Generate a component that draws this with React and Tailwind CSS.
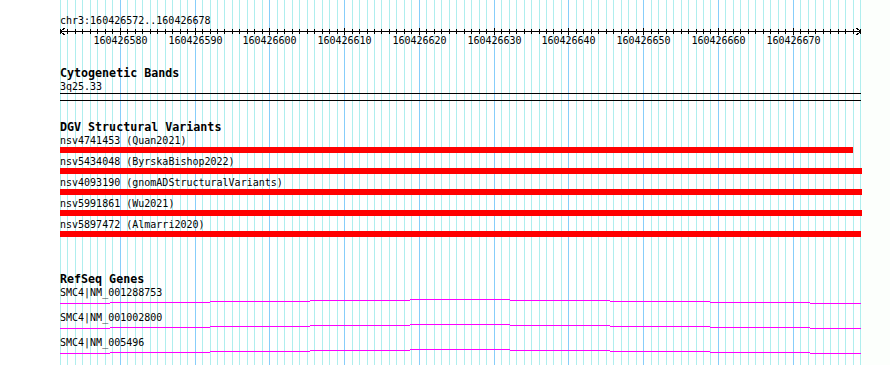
const START = 160426572;
const END = 160426678;
const PX = 800 / (END - START + 1);
const xOf = (b) => Math.round(60 + (b - START) * PX) + 0.5;

const bases = Array.from({ length: END - START + 2 }, (_, i) => START + i);

const variants = [
  { id: 'nsv4741453', study: 'Quan2021', end: 853 },
  { id: 'nsv5434048', study: 'ByrskaBishop2022', end: 862 },
  { id: 'nsv4093190', study: 'gnomADStructuralVariants', end: 862 },
  { id: 'nsv5991861', study: 'Wu2021', end: 862 },
  { id: 'nsv5897472', study: 'Almarri2020', end: 861 },
];

const genes = ['SMC4|NM_001288753', 'SMC4|NM_001002800', 'SMC4|NM_005496'];

// intron "hat" across the whole view, drawn with GD-style pixel steps
const hat = [
  [60, 110, 4],
  [110, 210, 3],
  [210, 310, 2],
  [310, 410, 1],
  [410, 510, 0],
  [510, 610, 1],
  [610, 710, 2],
  [710, 810, 3],
  [810, 861, 4],
];

function Grid() {
  return (
    <svg className="absolute inset-0" width="890" height="365" shapeRendering="crispEdges">
      <rect x="861" y="0" width="29" height="365" fill="#fcfffc" />
      {bases.map((b) => (
        <line
          key={b}
          x1={xOf(b)}
          x2={xOf(b)}
          y1="0"
          y2="365"
          stroke={b % 10 === 0 ? '#87cefa' : '#afeeee'}
          strokeWidth="1"
        />
      ))}
    </svg>
  );
}

function Ruler() {
  return (
    <svg width="890" height="21" className="block" shapeRendering="crispEdges">
      <line x1="60" x2="861" y1="4.5" y2="4.5" stroke="#000" />
      {bases.map((b) => (
        <line key={b} x1={xOf(b)} x2={xOf(b)} y1={b % 10 === 0 ? 1 : 2} y2={b % 10 === 0 ? 8 : 7} stroke="#000" />
      ))}
      <polyline points="64.5,1 60.5,4.5 64.5,8" fill="none" stroke="#000" />
      <polyline points="856.5,1 860.5,4.5 856.5,8" fill="none" stroke="#000" />
      {bases
        .filter((b) => b % 10 === 0 && b <= END)
        .map((b) => (
          <text
            key={b}
            x={xOf(b)}
            y="17"
            textAnchor="middle"
            fontSize="10"
            fontFamily="DejaVu Sans Mono, monospace"
            fill="#000"
          >
            {b}
          </text>
        ))}
    </svg>
  );
}

export default function App() {
  return (
    <div className="relative w-[890px] h-[365px] overflow-hidden bg-white text-black font-['DejaVu_Sans_Mono',monospace] text-[10px] leading-[13px]">
      <Grid />
      <div className="relative flex flex-col">
        <div className="pl-[60px] mt-[14px]">chr3:160426572..160426678</div>
        <Ruler />

        <div className="pl-[60px] mt-[19px] flex flex-col">
          <div className="font-bold text-[11.67px] leading-[13px]">Cytogenetic Bands</div>
          <div>3q25.33</div>
          <div className="w-[801px] h-[8px] border-y border-black" />
        </div>

        <div className="pl-[60px] mt-[20px] flex flex-col">
          <div className="font-bold text-[11.67px] leading-[13px]">DGV Structural Variants</div>
          {variants.map((v) => (
            <div key={v.id} className="flex flex-col h-[21px]">
              <div>
                {v.id} ({v.study})
              </div>
              <div className="h-[6px] bg-[#ff0000]" style={{ width: v.end - 60 }} />
            </div>
          ))}
        </div>

        <div className="pl-[60px] mt-[34px] flex flex-col">
          <div className="font-bold text-[11.67px] leading-[13px]">RefSeq Genes</div>
          {genes.map((g) => (
            <div key={g} className="flex flex-col h-[25px]">
              <div>{g}</div>
              <svg width="861" height="12" className="block -ml-[60px]" viewBox="0 0 861 12" shapeRendering="crispEdges">
                {hat.map(([a, b, y]) => (
                  <line key={a} x1={a} x2={b} y1={y + 0.5} y2={y + 0.5} stroke="#ff00ff" />
                ))}
              </svg>
            </div>
          ))}
        </div>
      </div>
    </div>
  );
}
